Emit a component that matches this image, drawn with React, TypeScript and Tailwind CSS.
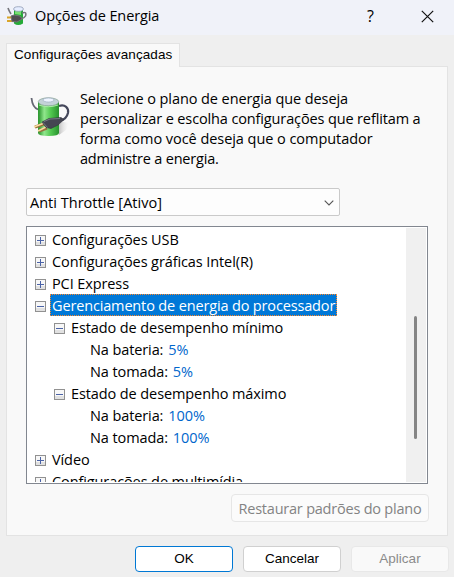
import type { ReactNode } from 'react';

const face = "font-['Open_Sans','Noto_Sans',sans-serif] text-[14.5px]";
const ui = `${face} tracking-[-0.1px]`;
const classic = "font-['Liberation_Sans',Arial,sans-serif] text-[13.5px]";

function BatteryIcon({ className }: { className: string }) {
  return (
    <svg className={className} viewBox="0 0 40 42" fill="none">
      <defs>
        <linearGradient id="cell" x1="9" y1="0" x2="30" y2="0" gradientUnits="userSpaceOnUse">
          <stop offset="0" stopColor="#329c35" />
          <stop offset=".25" stopColor="#91e68d" />
          <stop offset=".55" stopColor="#53c951" />
          <stop offset="1" stopColor="#238b2a" />
        </linearGradient>
        <linearGradient id="shade" x1="28" y1="0" x2="40" y2="0" gradientUnits="userSpaceOnUse">
          <stop offset="0" stopColor="#b9b9b9" />
          <stop offset="1" stopColor="#f9f9f9" stopOpacity="0" />
        </linearGradient>
      </defs>
      <path d="M29 24 39 26 36 33 29 38Z" fill="url(#shade)" />
      <path d="M1.5 1C2 6 4 11 8 12.5" stroke="#656874" strokeWidth="1.8" />
      <path d="M29 9C35 7 39 11 38 16C37 20 34 23 30 24" stroke="#45485b" strokeWidth="2.2" />
      <path d="M8 5V36Q8 39 18.5 39T29 36V5Z" fill="url(#cell)" />
      <ellipse cx="18.5" cy="4.8" rx="10.3" ry="4" fill="#c3d2d8" stroke="#87a294" strokeWidth=".7" />
      <ellipse cx="18.5" cy="3" rx="5.5" ry="2" fill="#eef5ff" stroke="#96a5bb" strokeWidth=".6" />
      <path d="M9 8Q18 11.5 28 8" stroke="#a8eaa4" />
      <path d="m14 27-9 3m12 1-8 3" stroke="#98703d" strokeWidth="3" />
      <path d="m13 26.5-9 3.5m12 0-8 4" stroke="#f9dda0" strokeWidth="1.5" />
      <path d="M12 25 19 21.5 31 20.5 34 22.5 28 28 21 31.5 16 30.5Z" fill="#454652" stroke="#30313c" strokeWidth=".6" />
      <path d="m14 24.5 6-2.5 10-.5" stroke="#777986" />
      <path d="m13 25.5 4.5 5" stroke="#747681" />
    </svg>
  );
}

function SmallBatteryIcon() {
  return (
    <svg className="h-5 w-5" viewBox="0 0 20 20" fill="none">
      <path d="M7 3V17.5Q11 20.5 16 17.5V3Z" fill="#24aa37" />
      <path d="M8 5V8L14 9V5Z" fill="#78de70" />
      <ellipse cx="11.5" cy="3" rx="4.8" ry="2.3" fill="#e5edff" stroke="#8490aa" strokeWidth=".7" />
      <path d="M1 2Q2 5 4 8M15 7Q20 5 18.5 10Q17.5 12 14 13" stroke="#74747b" strokeWidth="1.6" />
      <path d="M0 11.5H5M0 15H6" stroke="#d9a52b" strokeWidth="2" />
      <path d="m4 10 3-1 6 1 2 3-5 3-5-.5Z" fill="#504e52" stroke="#737174" />
    </svg>
  );
}

function Toggle({ open = false }: { open?: boolean }) {
  return (
    <svg className="h-[11px] w-[11px] shrink-0" viewBox="0 0 11 11" shapeRendering="crispEdges">
      <rect x=".5" y=".5" width="10" height="10" fill="#f7f7f7" stroke="#919191" />
      <path d="M1 7H10V10H1Z" fill="#e1e1e1" />
      <path d={open ? 'M2 5.5H9' : 'M2 5.5H9M5.5 2V9'} stroke="#4b63a7" />
    </svg>
  );
}

function Row({ children, open, level = 0 }: { children: ReactNode; open?: boolean; level?: number }) {
  return (
    <div className={`flex h-[22px] shrink-0 items-center whitespace-nowrap pt-[2px] ${level === 0 ? 'pl-[7px]' : level === 1 ? 'pl-[26px]' : 'pl-[62px]'}`}>
      {level < 2 && <Toggle open={open} />}
      <span className={level < 2 ? 'ml-[6px]' : ''}>{children}</span>
    </div>
  );
}

function Value({ label, value }: { label: string; value: string }) {
  return (
    <Row level={2}>
      <span>{label}</span>
      <span className="ml-[5px] text-[#0066cc]">{value}</span>
    </Row>
  );
}

export default function App() {
  return (
    <div className="flex h-[577px] w-[454px] flex-col overflow-hidden bg-[#efefef] text-black">
      <header className="flex h-[35px] shrink-0 items-center bg-[#f0f2f9] pl-[7px] pb-[3px]">
        <SmallBatteryIcon />
        <h1 className={`${ui} ml-[8px] leading-5`}>Opções de Energia</h1>
        <span className="ml-auto mr-[47px] font-['Open_Sans',sans-serif] text-[16px] leading-5">?</span>
        <svg className="mr-5 h-[13px] w-[13px]" viewBox="0 0 13 13" fill="none"><path d="m.8.8 11.4 11.4M12.2.8.8 12.2" stroke="#111" strokeWidth="1.2" /></svg>
      </header>

      <main className="ml-[6px] mt-2 flex w-[442px] flex-col">
        <div className={`${classic} z-10 mb-[-1px] flex h-6 w-[174px] items-center whitespace-nowrap border border-b-0 border-[#e3e3e3] bg-[#f9f9f9] pl-[7px] tracking-[0.1px]`}>Configurações avançadas</div>
        <section className="flex h-[470px] flex-col border border-[#e3e3e3] bg-[#f9f9f9] pl-[19px]">
          <div className="flex h-[121px] pt-[22px]">
            <BatteryIcon className="ml-[4px] mt-[8px] h-[42px] w-[40px] shrink-0" />
            <div className={`${face} ml-[10px] whitespace-nowrap leading-5`}>
              <div className="tracking-[-0.08px]">Selecione o plano de energia que deseja</div>
              <div className="tracking-[-0.13px]">personalizar e escolha configurações que reflitam a</div>
              <div className="tracking-[-0.05px]">forma como você deseja que o computador</div>
              <div className="tracking-[-0.2px]">administre a energia.</div>
            </div>
          </div>
          <div className={`${face} flex h-7 w-[314px] shrink-0 items-center justify-between rounded-[2px] border border-[#cacaca] bg-[#fdfdfd] pl-[3px] pr-[5px] pt-px`}>
            <span className="tracking-[0.02px]">Anti Throttle [Ativo]</span>
            <svg className="h-[6px] w-[10px]" viewBox="0 0 10 6" fill="none"><path d="m.7.7 4.3 4.3L9.3.7" stroke="#555" strokeWidth="1.1" /></svg>
          </div>
          <div className="mt-[10px] flex h-[258px] w-[402px] shrink-0 border border-[#828790] bg-white p-px">
            <div className={`${ui} flex h-[254px] min-w-0 flex-1 flex-col overflow-hidden`}>
              <Row>Configurações USB</Row>
              <Row>Configurações gráficas Intel(R)</Row>
              <Row>PCI Express</Row>
              <div className="flex h-[22px] shrink-0 items-center pl-[7px]">
                <span className="pt-[2px]"><Toggle open /></span>
                <span className={`${face} ml-1 flex h-[22px] w-[287px] items-center whitespace-nowrap border border-dotted border-[#ff8728] bg-[#0078d7] pl-px pt-[2px] tracking-[-0.15px] text-white`}>Gerenciamento de energia do processador</span>
              </div>
              <Row level={1} open>Estado de desempenho mínimo</Row>
              <Value label="Na bateria:" value="5%" />
              <Value label="Na tomada:" value="5%" />
              <Row level={1} open>Estado de desempenho máximo</Row>
              <Value label="Na bateria:" value="100%" />
              <Value label="Na tomada:" value="100%" />
              <Row>Vídeo</Row>
              <Row>Configurações de multimídia</Row>
            </div>
            <div className="w-5 bg-[#f0f0f0] pl-2 pt-[88px]"><div className="h-[123px] w-[3px] rounded-full bg-[#858585]" /></div>
          </div>
          <button className={`${face} ml-[205px] mt-[10px] h-7 w-[198px] shrink-0 whitespace-nowrap rounded-[4px] border border-[#e6e6e6] bg-[#fbfbfb] pt-px tracking-[-0.22px] text-[#838383]`}>Restaurar padrões do plano</button>
        </section>
      </main>
      <footer className={`${classic} ml-[135px] mt-[10px] flex gap-[10px]`}>
        <button className="h-[26px] w-[98px] rounded-[4px] border border-[#0078d4] bg-white pt-px">OK</button>
        <button className="h-[26px] w-[98px] rounded-[4px] border border-[#d0d0d0] bg-white pt-px">Cancelar</button>
        <button className="h-[26px] w-[98px] rounded-[4px] border border-[#e8e8e8] bg-[#f9f9f9] pt-px text-[#8b8b8b]">Aplicar</button>
      </footer>
    </div>
  );
}
